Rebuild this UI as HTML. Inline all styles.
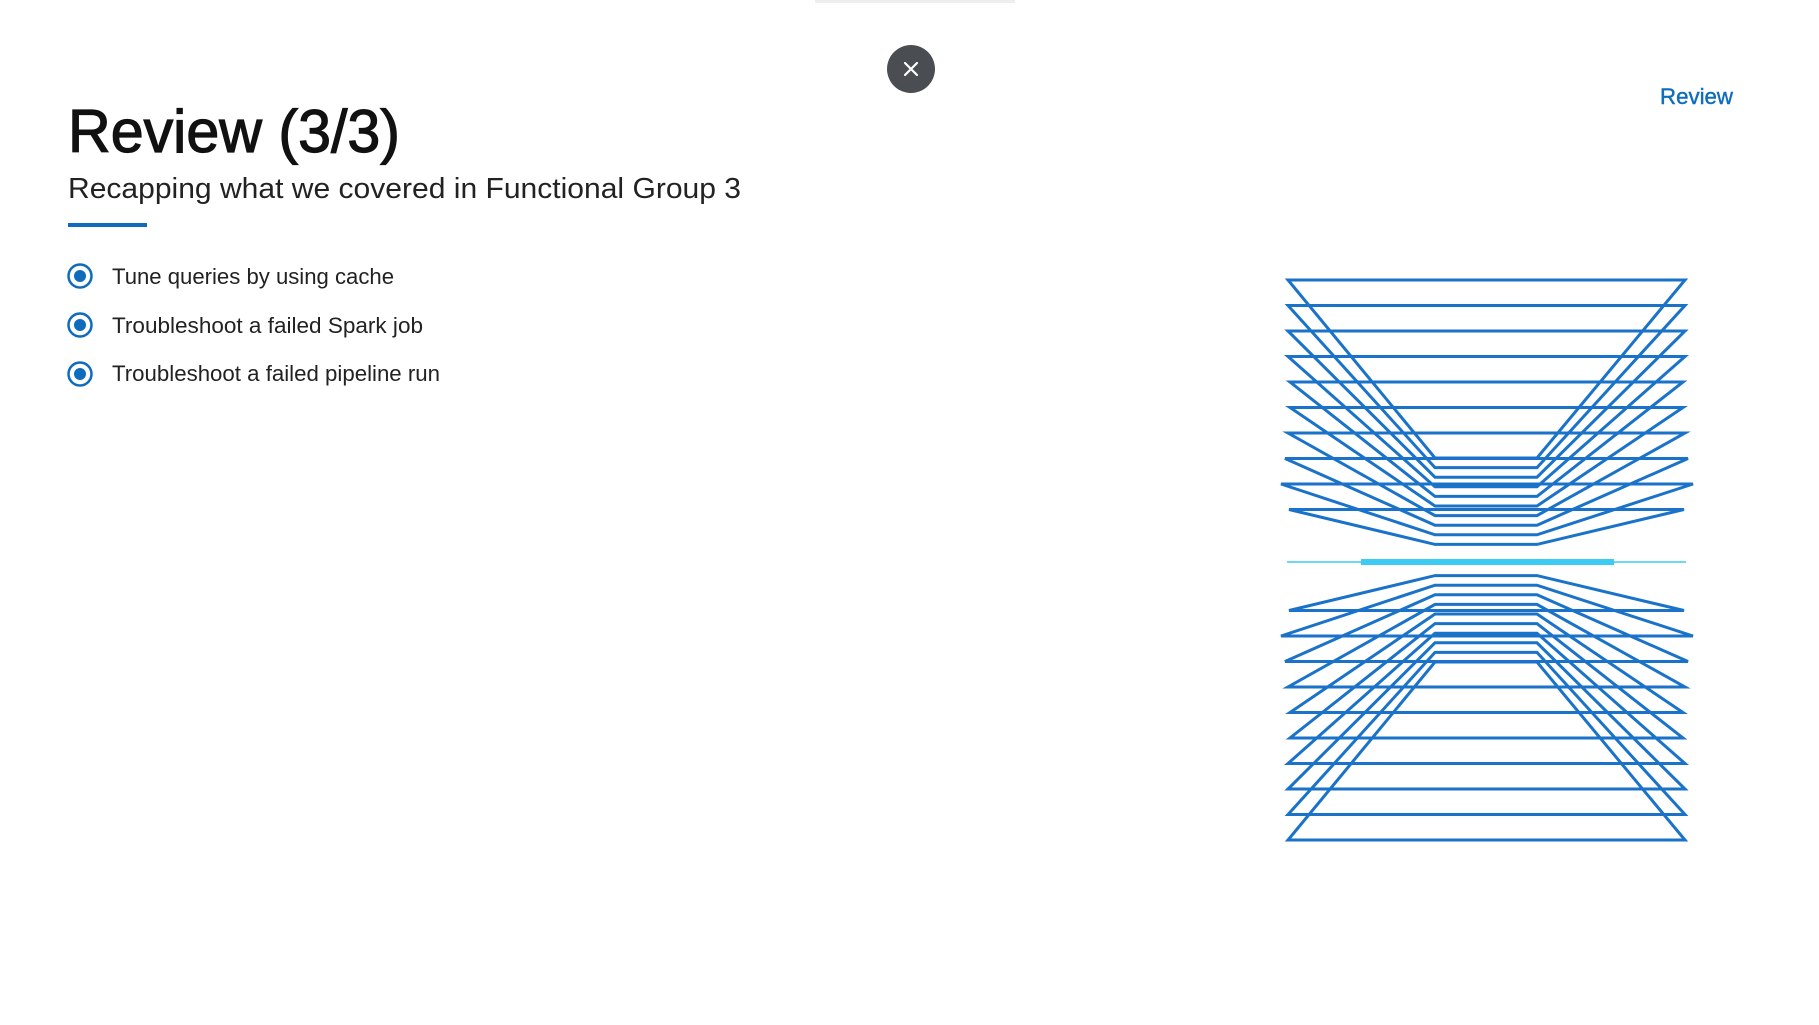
<!DOCTYPE html>
<html><head><meta charset="utf-8"><style>
html,body{margin:0;padding:0;background:#fff;width:1819px;height:1025px;overflow:hidden}
svg{display:block}
text{font-family:"Liberation Sans",sans-serif}
</style></head><body>
<svg width="1819" height="1025" viewBox="0 0 1819 1025" xmlns="http://www.w3.org/2000/svg">
<rect x="815" y="0" width="200" height="3" fill="#eeeeee"/>
<circle cx="911" cy="69" r="24" fill="#4a4d52"/>
<path d="M905 63 L917 75 M917 63 L905 75" stroke="#fff" stroke-width="2.2" stroke-linecap="round"/>
<text x="68" y="152" font-size="60" fill="#111" stroke="#111" stroke-width="1.2" textLength="332" lengthAdjust="spacingAndGlyphs">Review (3/3)</text>
<text x="68" y="198" font-size="29" fill="#222" textLength="673" lengthAdjust="spacingAndGlyphs">Recapping what we covered in Functional Group 3</text>
<rect x="68" y="223" width="79" height="4" fill="#0f6cbd"/>
<g fill="none" stroke="#0f6cbd" stroke-width="2.5">
<circle cx="80" cy="276" r="11.5"/><circle cx="80" cy="325" r="11.5"/><circle cx="80" cy="374" r="11.5"/>
</g>
<g fill="#0f6cbd"><circle cx="80" cy="276" r="6"/><circle cx="80" cy="325" r="6"/><circle cx="80" cy="374" r="6"/></g>
<g font-size="22" fill="#222">
<text x="112" y="284" textLength="282" lengthAdjust="spacingAndGlyphs">Tune queries by using cache</text>
<text x="112" y="333" textLength="311" lengthAdjust="spacingAndGlyphs">Troubleshoot a failed Spark job</text>
<text x="112" y="381" textLength="328" lengthAdjust="spacingAndGlyphs">Troubleshoot a failed pipeline run</text>
</g>
<text x="1660" y="104" font-size="22" fill="#0f6cbd" stroke="#0f6cbd" stroke-width="0.4" textLength="73" lengthAdjust="spacingAndGlyphs">Review</text>
<g id="top" fill="none" stroke="#1a73c9" stroke-width="3" stroke-linejoin="miter">
<polygon points="1288,280 1685,280 1537,458 1435,458"/>
<polygon points="1288,305.5 1685,305.5 1537,467.6 1435,467.6"/>
<polygon points="1288,331 1685,331 1537,477.2 1435,477.2"/>
<polygon points="1288,356.5 1685,356.5 1537,486.8 1435,486.8"/>
<polygon points="1290,382 1683,382 1537,496.4 1435,496.4"/>
<polygon points="1290,407.5 1683,407.5 1537,506 1435,506"/>
<polygon points="1288,433 1685,433 1537,515.6 1435,515.6"/>
<polygon points="1285,458.5 1688,458.5 1537,525.2 1435,525.2"/>
<polygon points="1281,484 1693,484 1537,534.8 1435,534.8"/>
<polygon points="1289,509.5 1684,509.5 1537,544.4 1435,544.4"/>
</g>
<use href="#top" transform="translate(0,1120) scale(1,-1)"/>
<line x1="1287" y1="562" x2="1686" y2="562" stroke="#6fd6f5" stroke-width="2"/>
<line x1="1361" y1="562" x2="1614" y2="562" stroke="#3ccbf2" stroke-width="6"/>
</svg>
</body></html>
